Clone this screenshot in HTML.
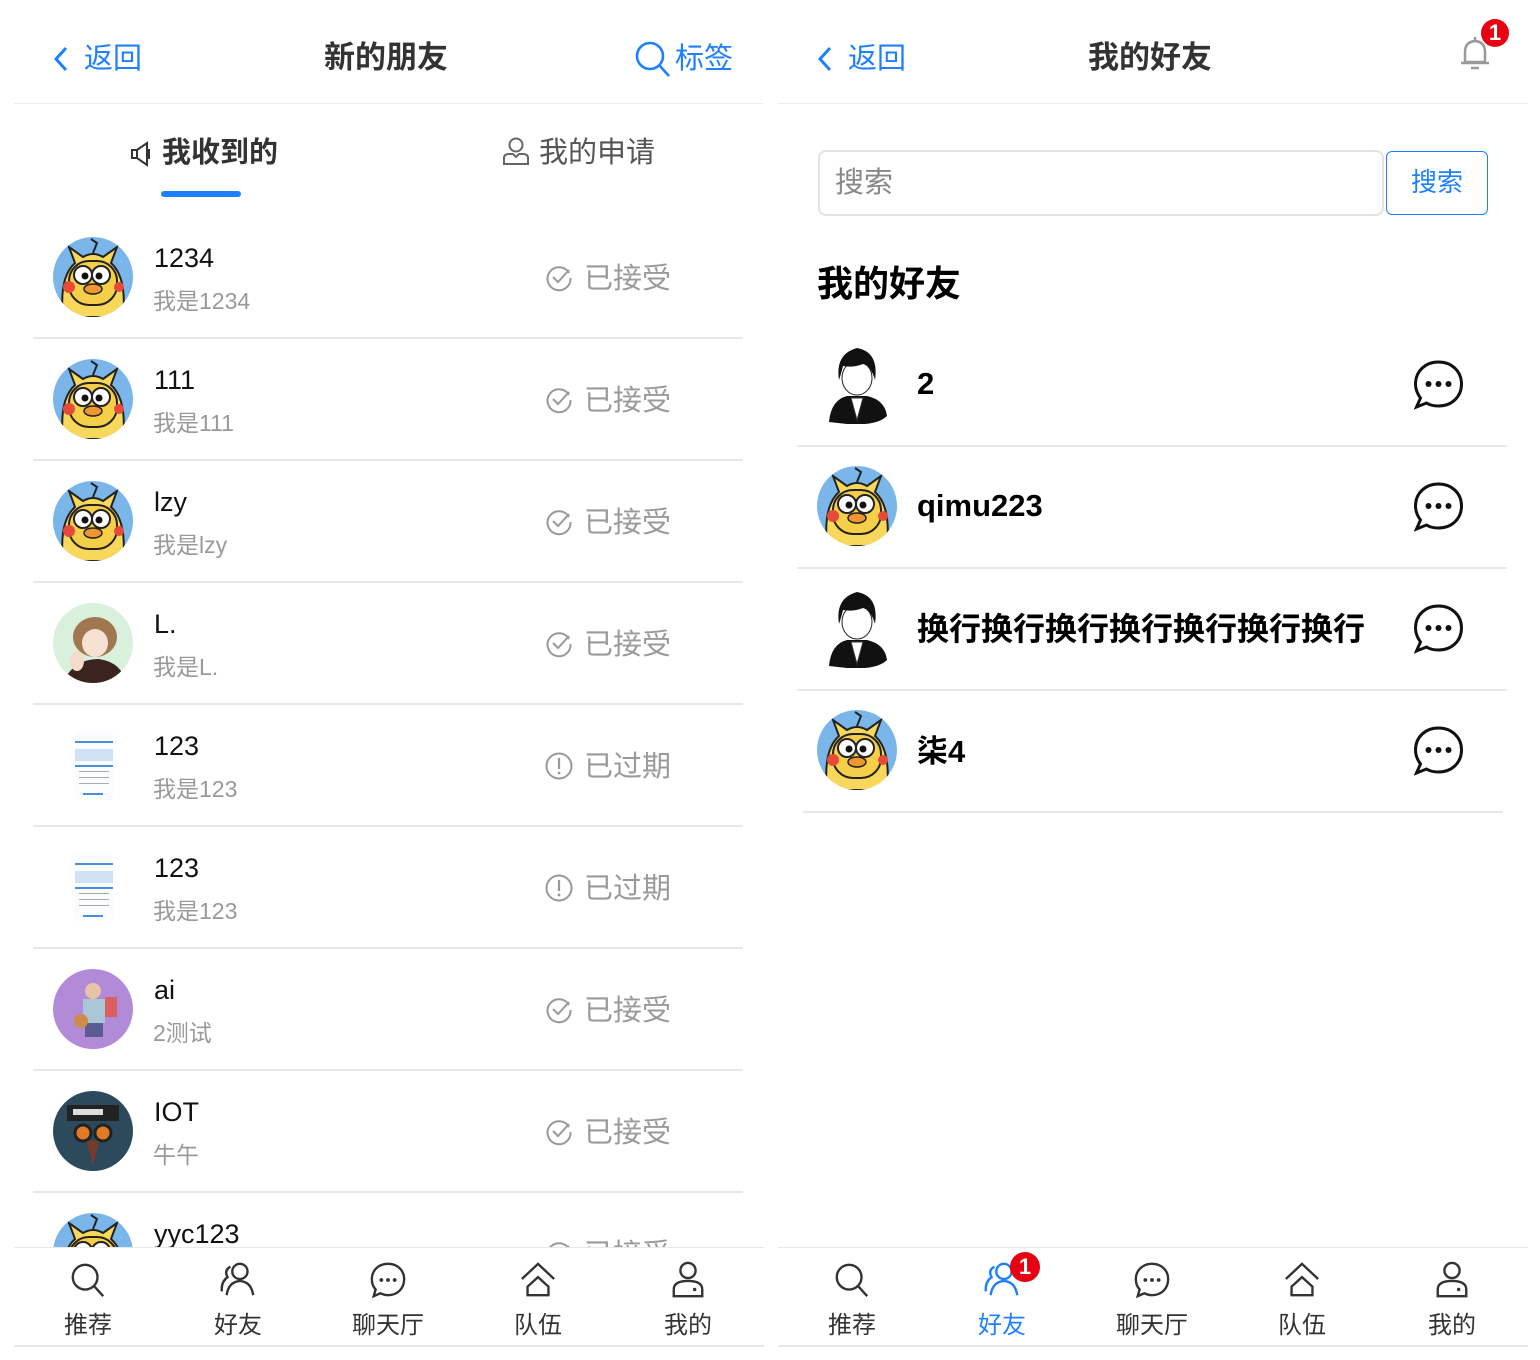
<!DOCTYPE html>
<html><head><meta charset="utf-8">
<style>
*{margin:0;padding:0;box-sizing:border-box}
body{width:1540px;height:1360px;background:#fff;position:relative;overflow:hidden;font-family:"Liberation Sans","Noto Sans CJK SC",sans-serif;color:#111}
.a{position:absolute}
.line{position:absolute;height:2px;background:#e8e8e8}
.blue{color:#1e80ff}
.name{position:absolute;font-size:27px;color:#111;line-height:30px}
.sub{position:absolute;font-size:23px;color:#999;line-height:26px}
.st{position:absolute;font-size:29px;color:#9a9a9a;line-height:32px}
.nav{position:absolute;width:120px;text-align:center;font-size:24px;color:#333}
.nav svg{display:block;margin:0 auto 6px}
.fname{position:absolute;font-size:31px;font-weight:bold;color:#000;line-height:34px}
</style></head><body>
<svg width="0" height="0" style="position:absolute">
<defs>
<symbol id="duck" viewBox="0 0 80 80">
<clipPath id="cc"><circle cx="40" cy="40" r="40"/></clipPath>
<g clip-path="url(#cc)">
<rect width="80" height="80" fill="#7ab6ea"/>
<path d="M10 80 Q6 40 22 26 L16 10 L30 20 Q40 14 50 20 L64 10 L58 26 Q74 40 70 80Z" fill="#f8d85a" stroke="#222" stroke-width="2"/>
<path d="M40 16 L44 6 L38 2" fill="none" stroke="#222" stroke-width="2"/>
<rect x="16" y="24" width="48" height="44" rx="20" fill="#f6cf48" stroke="#222" stroke-width="2"/>
<circle cx="30" cy="38" r="9" fill="#fff" stroke="#222" stroke-width="2"/>
<circle cx="48" cy="38" r="9" fill="#fff" stroke="#222" stroke-width="2"/>
<circle cx="32" cy="39" r="3.5" fill="#111"/><circle cx="46" cy="39" r="3.5" fill="#111"/>
<ellipse cx="40" cy="52" rx="9" ry="5" fill="#f0962e" stroke="#222" stroke-width="1.5"/>
<circle cx="16" cy="50" r="6" fill="#e84a3a"/><circle cx="66" cy="50" r="5" fill="#e84a3a"/>
</g></symbol>
<symbol id="boy" viewBox="0 0 80 80">
<path d="M12 78 Q14 56 30 52 L50 52 Q68 56 70 72 Q60 82 30 80Z" fill="#111"/>
<path d="M34 54 L40 76 L46 54Z" fill="#fff" stroke="#333"/>
<ellipse cx="40" cy="34" rx="15" ry="17" fill="#fff" stroke="#222"/>
<path d="M22 36 Q18 10 40 4 Q62 8 58 36 Q54 22 46 20 Q36 24 26 22 Q24 30 22 36Z" fill="#111"/>
</symbol>
<symbol id="doc" viewBox="0 0 80 80">
<rect x="22" y="6" width="38" height="68" fill="#fafcff"/>
<rect x="22" y="16" width="38" height="2" fill="#4a90d9"/>
<rect x="22" y="24" width="38" height="12" fill="#cfe3f5"/>
<rect x="22" y="40" width="38" height="2" fill="#4a90d9"/>
<rect x="26" y="46" width="30" height="1" fill="#aaa"/><rect x="26" y="52" width="30" height="1" fill="#aaa"/><rect x="26" y="58" width="30" height="1" fill="#aaa"/>
<rect x="30" y="68" width="20" height="2" fill="#4a90d9"/>
</symbol>
<symbol id="chk" viewBox="0 0 28 28"><path d="M24 9 A11.5 11.5 0 1 0 25.5 14" fill="none" stroke="#999" stroke-width="2"/><path d="M8 13 L13 18 L24 6" fill="none" stroke="#999" stroke-width="2"/></symbol>
<symbol id="exc" viewBox="0 0 28 28"><circle cx="14" cy="14" r="12.5" fill="none" stroke="#999" stroke-width="2"/><path d="M14 6 V17" stroke="#999" stroke-width="2.2"/><circle cx="14" cy="21" r="1.4" fill="#999"/></symbol>
<symbol id="chat" viewBox="0 0 52 52"><path d="M26 3 C39 3 49 12 49 25 C49 38 39 47 26 47 C21 47 17 46 14 44 L4 48 L8 39 C5 35 3 30 3 25 C3 12 13 3 26 3Z" fill="none" stroke="#111" stroke-width="3"/><circle cx="16" cy="25" r="3" fill="#111"/><circle cx="26" cy="25" r="3" fill="#111"/><circle cx="36" cy="25" r="3" fill="#111"/></symbol>
<symbol id="nsearch" viewBox="0 0 40 40"><circle cx="17" cy="17" r="13" fill="none" stroke="currentColor" stroke-width="2.5"/><path d="M26.5 26.5 L36 37" stroke="currentColor" stroke-width="2.5"/></symbol>
<symbol id="nfriend" viewBox="0 0 40 40"><circle cx="22" cy="11" r="8" fill="none" stroke="currentColor" stroke-width="2.5"/><path d="M8 36 Q10 22 22 21 Q34 22 36 36" fill="none" stroke="currentColor" stroke-width="2.5"/><path d="M12 6 Q5 10 9 17 Q2 22 3 32" fill="none" stroke="currentColor" stroke-width="2.5"/></symbol>
<symbol id="nchat" viewBox="0 0 40 40"><path d="M20 3 C30 3 37 10 37 19 C37 29 30 36 20 36 C17 36 14 35 12 34 L5 37 L7 30 C4 27 3 23 3 19 C3 10 10 3 20 3Z" fill="none" stroke="currentColor" stroke-width="2.5"/><circle cx="13" cy="20" r="2" fill="currentColor"/><circle cx="20" cy="20" r="2" fill="currentColor"/><circle cx="27" cy="20" r="2" fill="currentColor"/></symbol>
<symbol id="nteam" viewBox="0 0 40 40"><path d="M3 19 L20 3 L37 19" fill="none" stroke="currentColor" stroke-width="2.5"/><path d="M9 36 V27 L20 17 L31 27 V36Z" fill="none" stroke="currentColor" stroke-width="2.5"/></symbol>
<symbol id="nme" viewBox="0 0 40 40"><circle cx="20" cy="10" r="8" fill="none" stroke="currentColor" stroke-width="2.5"/><path d="M5 37 V30 Q5 21 20 21 Q35 21 35 30 V37Z" fill="none" stroke="currentColor" stroke-width="2.5"/><circle cx="27" cy="30" r="1.8" fill="currentColor"/></symbol>
</defs></svg>

<!-- LEFT PANEL -->
<svg class="a" style="left:52px;top:45px" width="18" height="28" viewBox="0 0 18 28"><path d="M14 3 L4 14 L14 25" fill="none" stroke="#1e80ff" stroke-width="3"/></svg>
<div class="a blue" style="left:84px;top:41px;font-size:29px;line-height:36px">返回</div>
<div class="a" style="left:324px;top:38px;font-size:31px;font-weight:bold;color:#333;line-height:40px">新的朋友</div>
<svg class="a" style="left:634px;top:40px" width="38" height="38" viewBox="0 0 38 38"><circle cx="16" cy="16" r="13" fill="none" stroke="#1e80ff" stroke-width="2.6"/><path d="M25.5 25.5 L35 36" stroke="#1e80ff" stroke-width="2.6"/></svg>
<div class="a blue" style="left:675px;top:41px;font-size:29px;line-height:36px">标签</div>
<div class="line" style="left:14px;top:103px;width:750px;height:1px;background:#ececec"></div>

<svg class="a" style="left:130px;top:141px" width="22" height="26" viewBox="0 0 22 26"><path d="M2 9 H7 L17 2 V24 L7 17 H2Z M7 9 V17 M19 8 V18" fill="none" stroke="#333" stroke-width="2"/></svg>
<div class="a" style="left:162px;top:135px;font-size:29px;font-weight:bold;color:#333;line-height:36px">我收到的</div>
<div class="a" style="left:161px;top:191px;width:80px;height:6px;border-radius:3px;background:#1e80ff"></div>
<svg class="a" style="left:502px;top:136px" width="28" height="30" viewBox="0 0 28 30"><circle cx="14" cy="9" r="6.5" fill="none" stroke="#666" stroke-width="2"/><path d="M2 28 V22 Q2 18 7 18 L11 18 L14 21 L17 18 L21 18 Q26 18 26 22 V28Z" fill="none" stroke="#666" stroke-width="2"/></svg>
<div class="a" style="left:539px;top:135px;font-size:29px;color:#555;line-height:36px">我的申请</div>

<!-- rows -->
<svg class="a" style="left:53px;top:237px" width="80" height="80"><use href="#duck"/></svg>
<div class="name" style="left:154px;top:243px">1234</div><div class="sub" style="left:153px;top:288px">我是1234</div>
<svg class="a" style="left:545px;top:264px" width="28" height="28"><use href="#chk"/></svg><div class="st" style="left:584px;top:263px">已接受</div>
<div class="line" style="left:33px;top:337px;width:710px"></div>

<svg class="a" style="left:53px;top:359px" width="80" height="80"><use href="#duck"/></svg>
<div class="name" style="left:154px;top:365px">111</div><div class="sub" style="left:153px;top:410px">我是111</div>
<svg class="a" style="left:545px;top:386px" width="28" height="28"><use href="#chk"/></svg><div class="st" style="left:584px;top:385px">已接受</div>
<div class="line" style="left:33px;top:459px;width:710px"></div>

<svg class="a" style="left:53px;top:481px" width="80" height="80"><use href="#duck"/></svg>
<div class="name" style="left:154px;top:487px">lzy</div><div class="sub" style="left:153px;top:532px">我是lzy</div>
<svg class="a" style="left:545px;top:508px" width="28" height="28"><use href="#chk"/></svg><div class="st" style="left:584px;top:507px">已接受</div>
<div class="line" style="left:33px;top:581px;width:710px"></div>

<svg class="a" style="left:53px;top:603px" width="80" height="80" viewBox="0 0 80 80"><clipPath id="c2"><circle cx="40" cy="40" r="40"/></clipPath><g clip-path="url(#c2)"><rect width="80" height="80" fill="#d8f0dc"/><ellipse cx="42" cy="34" rx="22" ry="20" fill="#a0774e"/><ellipse cx="42" cy="40" rx="13" ry="14" fill="#f6e2d2"/><path d="M10 80 Q20 56 46 56 Q70 60 72 80Z" fill="#3b2320"/><ellipse cx="24" cy="58" rx="7" ry="10" fill="#f3dccb"/></g></svg>
<div class="name" style="left:154px;top:609px">L.</div><div class="sub" style="left:153px;top:654px">我是L.</div>
<svg class="a" style="left:545px;top:630px" width="28" height="28"><use href="#chk"/></svg><div class="st" style="left:584px;top:629px">已接受</div>
<div class="line" style="left:33px;top:703px;width:710px"></div>

<svg class="a" style="left:53px;top:725px" width="80" height="80"><use href="#doc"/></svg>
<div class="name" style="left:154px;top:731px">123</div><div class="sub" style="left:153px;top:776px">我是123</div>
<svg class="a" style="left:545px;top:752px" width="28" height="28"><use href="#exc"/></svg><div class="st" style="left:584px;top:751px">已过期</div>
<div class="line" style="left:33px;top:825px;width:710px"></div>

<svg class="a" style="left:53px;top:847px" width="80" height="80"><use href="#doc"/></svg>
<div class="name" style="left:154px;top:853px">123</div><div class="sub" style="left:153px;top:898px">我是123</div>
<svg class="a" style="left:545px;top:874px" width="28" height="28"><use href="#exc"/></svg><div class="st" style="left:584px;top:873px">已过期</div>
<div class="line" style="left:33px;top:947px;width:710px"></div>

<svg class="a" style="left:53px;top:969px" width="80" height="80" viewBox="0 0 80 80"><clipPath id="c3"><circle cx="40" cy="40" r="40"/></clipPath><g clip-path="url(#c3)"><rect width="80" height="80" fill="#b18ad8"/><rect x="30" y="30" width="22" height="24" fill="#a9c7d6"/><rect x="32" y="54" width="18" height="14" fill="#5a5c92"/><circle cx="40" cy="22" r="8" fill="#e8c3a8"/><rect x="52" y="28" width="12" height="20" fill="#d9605e"/><circle cx="28" cy="52" r="7" fill="#d08a4a"/></g></svg>
<div class="name" style="left:154px;top:975px">ai</div><div class="sub" style="left:153px;top:1020px">2测试</div>
<svg class="a" style="left:545px;top:996px" width="28" height="28"><use href="#chk"/></svg><div class="st" style="left:584px;top:995px">已接受</div>
<div class="line" style="left:33px;top:1069px;width:710px"></div>

<svg class="a" style="left:53px;top:1091px" width="80" height="80" viewBox="0 0 80 80"><clipPath id="c4"><circle cx="40" cy="40" r="40"/></clipPath><g clip-path="url(#c4)"><rect width="80" height="80" fill="#2c4a5c"/><rect x="14" y="14" width="52" height="16" fill="#222"/><rect x="20" y="18" width="30" height="6" fill="#ddd"/><circle cx="30" cy="42" r="8" fill="#e07a28" stroke="#222" stroke-width="3"/><circle cx="50" cy="42" r="8" fill="#e07a28" stroke="#222" stroke-width="3"/><path d="M34 50 L46 50 L40 74Z" fill="#7a3a2a"/></g></svg>
<div class="name" style="left:154px;top:1097px">IOT</div><div class="sub" style="left:153px;top:1142px">牛午</div>
<svg class="a" style="left:545px;top:1118px" width="28" height="28"><use href="#chk"/></svg><div class="st" style="left:584px;top:1117px">已接受</div>
<div class="line" style="left:33px;top:1191px;width:710px"></div>

<svg class="a" style="left:53px;top:1213px" width="80" height="80"><use href="#duck"/></svg>
<div class="name" style="left:154px;top:1219px">yyc123</div>
<svg class="a" style="left:545px;top:1240px" width="28" height="28"><use href="#chk"/></svg><div class="st" style="left:584px;top:1239px">已接受</div>

<!-- left nav -->
<div class="a" style="left:14px;top:1247px;width:750px;height:100px;background:#fff;border-top:1px solid #e8e8e8;border-bottom:2px solid #e8e8e8"></div>
<div class="nav" style="left:28px;top:1261px"><svg width="38" height="38" style="color:#333"><use href="#nsearch"/></svg>推荐</div>
<div class="nav" style="left:178px;top:1261px"><svg width="38" height="38" style="color:#333"><use href="#nfriend"/></svg>好友</div>
<div class="nav" style="left:328px;top:1261px"><svg width="38" height="38" style="color:#333"><use href="#nchat"/></svg>聊天厅</div>
<div class="nav" style="left:478px;top:1261px"><svg width="38" height="38" style="color:#333"><use href="#nteam"/></svg>队伍</div>
<div class="nav" style="left:628px;top:1261px"><svg width="38" height="38" style="color:#333"><use href="#nme"/></svg>我的</div>

<!-- RIGHT PANEL -->
<svg class="a" style="left:816px;top:45px" width="18" height="28" viewBox="0 0 18 28"><path d="M14 3 L4 14 L14 25" fill="none" stroke="#1e80ff" stroke-width="3"/></svg>
<div class="a blue" style="left:848px;top:41px;font-size:29px;line-height:36px">返回</div>
<div class="a" style="left:1088px;top:38px;font-size:31px;font-weight:bold;color:#333;line-height:40px">我的好友</div>
<svg class="a" style="left:1456px;top:34px" width="38" height="38" viewBox="0 0 38 38"><path d="M9 28 V18 Q9 8 19 7 Q29 8 29 18 V28 Z M5 29 H33 M15 34 H23 M19 3 V7" fill="none" stroke="#999" stroke-width="2.5"/></svg>
<div class="a" style="left:1481px;top:19px;width:28px;height:28px;border-radius:14px;background:#e60012;color:#fff;font-weight:bold;font-size:22px;text-align:center;line-height:28px">1</div>
<div class="line" style="left:778px;top:103px;width:750px;height:1px;background:#ececec"></div>

<div class="a" style="left:818px;top:150px;width:566px;height:66px;border:2px solid #e3e3e3;border-radius:8px"></div>
<div class="a" style="left:835px;top:165px;font-size:29px;color:#888;line-height:36px">搜索</div>
<div class="a" style="left:1386px;top:151px;width:102px;height:64px;border:1.5px solid #1e80ff;border-radius:6px;color:#1e80ff;font-size:26px;text-align:center;line-height:60px">搜索</div>

<div class="a" style="left:817px;top:262px;font-size:36px;font-weight:bold;color:#000;line-height:44px">我的好友</div>

<svg class="a" style="left:817px;top:344px" width="80" height="80"><use href="#boy"/></svg>
<div class="fname" style="left:917px;top:367px">2</div>
<svg class="a" style="left:1412px;top:359px" width="53" height="52"><use href="#chat"/></svg>
<div class="line" style="left:797px;top:445px;width:710px"></div>

<svg class="a" style="left:817px;top:466px" width="80" height="80"><use href="#duck"/></svg>
<div class="fname" style="left:917px;top:489px">qimu223</div>
<svg class="a" style="left:1412px;top:481px" width="53" height="52"><use href="#chat"/></svg>
<div class="line" style="left:797px;top:567px;width:710px"></div>

<svg class="a" style="left:817px;top:588px" width="80" height="80"><use href="#boy"/></svg>
<div class="fname" style="left:917px;top:612px;font-size:32px">换行换行换行换行换行换行换行</div>
<svg class="a" style="left:1412px;top:603px" width="53" height="52"><use href="#chat"/></svg>
<div class="line" style="left:797px;top:689px;width:710px"></div>

<svg class="a" style="left:817px;top:710px" width="80" height="80"><use href="#duck"/></svg>
<div class="fname" style="left:917px;top:735px">柒4</div>
<svg class="a" style="left:1412px;top:725px" width="53" height="52"><use href="#chat"/></svg>
<div class="line" style="left:803px;top:811px;width:700px"></div>

<!-- right nav -->
<div class="a" style="left:778px;top:1247px;width:750px;height:100px;background:#fff;border-top:1px solid #e8e8e8;border-bottom:2px solid #e8e8e8"></div>
<div class="nav" style="left:792px;top:1261px"><svg width="38" height="38" style="color:#333"><use href="#nsearch"/></svg>推荐</div>
<div class="nav" style="left:942px;top:1261px;color:#1e80ff"><svg width="38" height="38" style="color:#1e80ff"><use href="#nfriend"/></svg>好友</div>
<div class="a" style="left:1010px;top:1252px;width:30px;height:30px;border-radius:15px;background:#e60012;color:#fff;font-weight:bold;font-size:22px;text-align:center;line-height:30px">1</div>
<div class="nav" style="left:1092px;top:1261px"><svg width="38" height="38" style="color:#333"><use href="#nchat"/></svg>聊天厅</div>
<div class="nav" style="left:1242px;top:1261px"><svg width="38" height="38" style="color:#333"><use href="#nteam"/></svg>队伍</div>
<div class="nav" style="left:1392px;top:1261px"><svg width="38" height="38" style="color:#333"><use href="#nme"/></svg>我的</div>
</body></html>
